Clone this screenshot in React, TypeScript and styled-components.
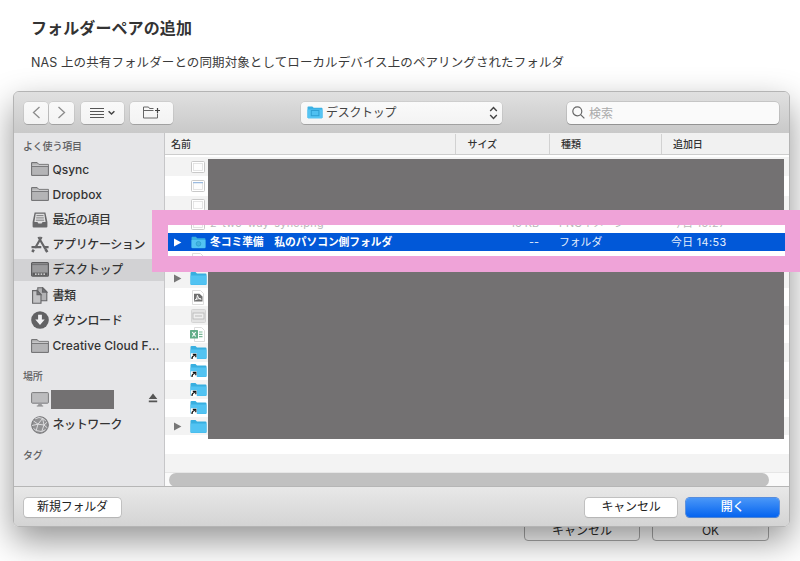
import React from "react";
import styled, { createGlobalStyle } from "styled-components";

const GlobalStyle = createGlobalStyle`
  * { box-sizing: border-box; }
  body {
    margin: 0;
    background: #fff;
    overflow: hidden;
    font-family: Inter, "Noto Sans CJK JP", sans-serif;
    color: #2c2c2c;
  }
  svg { display: block; flex: none; }
`;

const Page = styled.div`
  position: relative;
  width: 800px;
  height: 561px;
  overflow: hidden;
  display: flex;
  flex-direction: column;
  justify-content: space-between;
  background: #fff;
`;

const Intro = styled.header`
  padding: 16px 31px 0;
`;

const Title = styled.h1`
  margin: 0;
  font-size: 16px;
  line-height: 24px;
  font-weight: 700;
  letter-spacing: 0.1px;
  color: #333;
`;

const Lead = styled.p`
  margin: 13px 0 0;
  font-size: 12.5px;
  line-height: 20px;
  letter-spacing: 0.1px;
  white-space: nowrap;
  color: #3a3a3a;
`;

const BackActions = styled.div`
  display: flex;
  justify-content: flex-end;
  gap: 12px;
  padding: 0 31px 20px 0;
`;

const BackButton = styled.div`
  width: 117px;
  height: 20px;
  border: 1px solid #aaa;
  border-radius: 4px;
  background: #fff;
  font-size: 12px;
  line-height: 18px;
  text-align: center;

  &:first-child { width: 116px; }
`;

const Window = styled.section`
  position: absolute;
  left: 13px;
  top: 91px;
  width: 777px;
  height: 436px;
  display: flex;
  flex-direction: column;
  border: 1px solid #b4b4b4;
  border-radius: 6px;
  overflow: hidden;
  background: #e6e6e6;
`;

const WindowShadow = styled.div`
  position: absolute;
  left: 13px;
  top: 91px;
  width: 777px;
  height: 436px;
  border-radius: 6px;
  box-shadow: 0 14px 34px rgba(0, 0, 0, 0.42);
`;

const Toolbar = styled.div`
  flex: none;
  height: 41px;
  display: flex;
  align-items: center;
  padding: 0 10px;
  background: linear-gradient(#e0e0e0, #c9c9c9);
`;

const ToolButton = styled.div<{ w: number; gap?: number }>`
  width: ${({ w }) => w}px;
  height: 22px;
  margin-right: ${({ gap }) => gap || 0}px;
  display: flex;
  align-items: center;
  justify-content: center;
  gap: 4px;
  border-radius: 4px;
  background: linear-gradient(#f9f9f9, #f3f3f3);
  box-shadow: 0 0 0 0.5px rgba(0, 0, 0, 0.12), 0 1px 0.5px rgba(0, 0, 0, 0.16);
`;

const LocationSelect = styled.div`
  width: 201px;
  height: 22px;
  margin-left: 128px;
  padding: 0 4px 0 6px;
  display: flex;
  align-items: center;
  border-radius: 4px;
  background: linear-gradient(#fafafa, #f3f3f3);
  box-shadow: 0 0 0 0.5px rgba(0, 0, 0, 0.12), 0 1px 0.5px rgba(0, 0, 0, 0.16);
  font-size: 12px;
  line-height: 20px;
  letter-spacing: -0.3px;
  color: #444;

  span {
    flex: 1;
    margin-left: 3px;
  }
`;

const SearchField = styled.div`
  width: 212px;
  height: 22px;
  margin-left: auto;
  padding-left: 5px;
  display: flex;
  align-items: center;
  gap: 4px;
  border-radius: 4px;
  background: #fafafa;
  box-shadow: 0 0 0 0.5px rgba(0, 0, 0, 0.2), 0 1px 0.5px rgba(0, 0, 0, 0.2);
  font-size: 12px;
  color: #aaa;
`;

const Body = styled.div`
  flex: none;
  height: 353px;
  display: flex;
`;

const Sidebar = styled.nav`
  width: 151px;
  flex: none;
  padding-top: 3px;
  border-right: 1px solid #c6c6c8;
  background: #e6e6e8;
`;

const SectionLabel = styled.div<{ before?: number }>`
  height: 20px;
  margin-top: ${({ before }) => before || 0}px;
  padding-left: 9px;
  font-size: 10px;
  line-height: 21px;
  font-weight: 500;
  letter-spacing: -0.2px;
  color: #606062;
`;

const SideItem = styled.div<{ active?: boolean }>`
  height: 22.4px;
  margin-top: 2.8px;
  padding: 0 6px 0 16.5px;
  display: flex;
  align-items: center;
  gap: 4px;
  background: ${({ active }) => (active ? "#d2d2d4" : "transparent")};
  color: #333;

  ${SectionLabel} + & { margin-top: 2px; }
`;

const SideText = styled.span<{ spacing?: number }>`
  font-size: 12px;
  line-height: 20px;
  font-weight: 500;
  margin-top: 0.8px;
  letter-spacing: ${({ spacing }) => spacing || 0}px;
  white-space: nowrap;
`;

const VolumeName = styled.span`
  width: 63px;
  height: 19px;
  margin-left: -2px;
  background: #737172;
`;

const EjectSlot = styled.span`
  margin: -2px 0 0 auto;
`;

const List = styled.div`
  flex: 1;
  min-width: 0;
  display: flex;
  flex-direction: column;
  background: #fff;
`;

const columns = "291px 94px 112px 1fr";

const ListHead = styled.div`
  flex: none;
  height: 22px;
  display: grid;
  grid-template-columns: ${columns};
  padding: 1px 0;
  margin-bottom: 2px;
  background: #f1f1f1;
  border-bottom: 1px solid #cdcdcd;
`;

const HeadCell = styled.div<{ pad: number }>`
  padding-left: ${({ pad }) => pad}px;
  border-right: 1px solid #d2d2d2;
  font-size: 10px;
  line-height: 20px;
  font-weight: 500;
  letter-spacing: -0.1px;
  color: #333;

  &:last-child { border-right: none; }
`;

const Row = styled.div<{ h: number; shade?: boolean; selected?: boolean; faded?: boolean }>`
  flex: none;
  height: ${({ h }) => h}px;
  display: grid;
  grid-template-columns: ${columns};
  align-items: center;
  background: ${({ shade, selected }) => (selected ? "#0158d8" : shade ? "#f3f3f3" : "#fff")};
  color: ${({ selected, faded }) => (selected ? "#e4eefc" : faded ? "#b8b8b8" : "#333")};
  font-size: 10.8px;
  line-height: 17px;
  white-space: nowrap;
`;

const NameCell = styled.div<{ strong?: boolean }>`
  display: flex;
  align-items: center;
  color: ${({ strong }) => (strong ? "#fff" : "inherit")};
  font-weight: ${({ strong }) => (strong ? 700 : 400)};
  letter-spacing: ${({ strong }) => (strong ? "-0.08px" : "0.35px")};
`;

const ArrowSlot = styled.span`
  width: 24px;
  padding-left: 8px;
`;

const IconSlot = styled.span`
  width: 18px;
  height: 17px;
  margin-right: 3px;
  display: flex;
  align-items: center;
  justify-content: center;
`;

const SizeCell = styled.div`
  padding-right: 11px;
  text-align: right;
`;

const KindCell = styled.div`
  padding-left: 9px;
`;

const DateCell = styled.div`
  padding-left: 9px;
  letter-spacing: 0.4px;
`;

const ScrollTrack = styled.div`
  flex: 1;
  padding: 0 20px 0 4px;
  border-top: 1px solid #e6e6e6;
  background: #fafafa;
`;

const ScrollThumb = styled.div`
  height: 14px;
  border-radius: 7px;
  background: #c1c1c1;
`;

const Footer = styled.div`
  flex: 1;
  display: flex;
  align-items: center;
  gap: 9px;
  padding: 1px 10px 0;
  border-top: 1px solid #b6b6b6;
  background: linear-gradient(#e8e8e8, #d4d4d4);
`;

const PushButton = styled.div<{ w: number; primary?: boolean }>`
  width: ${({ w }) => w}px;
  height: 19px;
  border-radius: 3.5px;
  background: ${({ primary }) => (primary ? "linear-gradient(#4a97f8, #0564ef)" : "#fff")};
  box-shadow: 0 0 0 0.7px ${({ primary }) => (primary ? "#2a72dc" : "#b5b5b5")}, 0 1px 1px rgba(0, 0, 0, 0.15);
  color: ${({ primary }) => (primary ? "#fff" : "#222")};
  font-size: 12px;
  line-height: 18px;
  letter-spacing: -0.2px;
  font-weight: ${({ primary }) => (primary ? 500 : 400)};
  text-align: center;

  &:first-child { margin-right: auto; }
`;

/* solid covers over the private file names */
const Cover = styled.div<{ top: number; h: number }>`
  position: absolute;
  left: 208px;
  top: ${({ top }) => top}px;
  width: 576px;
  height: ${({ h }) => h}px;
  background: #737172;
`;

const Highlight = styled.div`
  position: absolute;
  left: 152px;
  top: 210px;
  width: 648px;
  height: 62px;
  border: solid #efa3d8;
  border-width: 15px 15px 16px 16px;
`;

const SideFolder = () => (
  <svg width="18" height="16" viewBox="0 0 18 16">
    <path d="M.6 14.4V1.6h5.6l1.6 1.8h9.6v11z" fill="#b4b4b6" stroke="#6c6c6e" />
    <path d="M1 5.300h16" stroke="#6c6c6e" />
    <path d="M1.200 4.300h16" stroke="#dcdcde" strokeWidth=".8" />
  </svg>
);

const RecentIcon = () => (
  <svg width="18" height="16" viewBox="0 0 18 16">
    <path d="M3.600.6h10.800l2 9.400v4.400q0 1-1 1H2.600q-1 0-1-1V10z" fill="#68686a" />
    <path d="M4.700 1.700h8.600l1.300 8.300h-3l-1 1.600H7.400L6.400 10h-3z" fill="#dededf" />
    <path d="M5.500 3.600h7M5.200 5.900h7.600M4.900 8.200h8.200" stroke="#828284" />
  </svg>
);

const AppsIcon = () => (
  <svg width="18" height="17" viewBox="0 0 18 17" fill="none" stroke="#656567">
    <path d="M10.600 1 4.100 12M7.400 1l7 12" strokeWidth="2.200" />
    <path d="M.5 11.200h9.800M12.800 11.200h4.800" strokeWidth="2.200" />
    <path d="M2.800 13.600 1.300 16M14.400 13l1.900 3.200" strokeWidth="2.600" />
  </svg>
);

const DesktopIcon = () => (
  <svg width="18" height="15" viewBox="0 0 18 15">
    <rect x=".6" y=".6" width="16.800" height="13.600" rx="1" fill="#9a9a9c" stroke="#5c5c5e" strokeWidth="1.200" />
    <path d="M1 2.600h16" stroke="#707072" />
    <rect x="1.500" y="10.600" width="15" height="3.200" fill="#5c5c5e" />
    <path d="M4 12.200h10.500" stroke="#eee" strokeWidth="1.300" strokeDasharray="1.600 1.200" />
  </svg>
);

const DocsIcon = () => (
  <svg width="18" height="17" viewBox="0 0 18 17" stroke="#666668" strokeWidth="1.100">
    <path d="M6.800.8h5l4 4v9h-9z" fill="#b2b2b4" />
    <path d="M11.500.8v4.300h4.300z" fill="#77777a" />
    <path d="M1.600 3.600h4.600l3.800 3.800v8.800H1.600z" fill="#c2c2c4" />
    <path d="M6 3.600v4h4z" fill="#77777a" />
  </svg>
);

const DownloadIcon = () => (
  <svg width="18" height="18" viewBox="0 0 18 18">
    <circle cx="9" cy="9" r="8.800" fill="#626264" />
    <path d="M7.100 3.800h3.800v4.600h2.800L9 13.900 4.300 8.400h2.800z" fill="#f0f0f2" />
  </svg>
);

const DisplayIcon = () => (
  <svg width="18" height="15" viewBox="0 0 18 15">
    <rect x=".6" y=".6" width="16.800" height="10.600" rx=".8" fill="#bcbcbe" stroke="#7c7c7e" />
    <path d="M7.500 11.500h3l.7 2.200H6.800z" fill="#9a9a9c" />
    <path d="M5.800 14h6.400" stroke="#7c7c7e" strokeWidth=".9" />
  </svg>
);

const NetworkIcon = () => (
  <svg width="18" height="18" viewBox="0 0 18 18" fill="none">
    <circle cx="9" cy="9" r="8.300" fill="#929294" stroke="#737375" />
    <path d="M2.600 5 7 8.200 5.200 14.500M7 8.200l4.600-5.800M7 8.200l6 .8 3.300-3M13 9l-2.300 6.600M13 9l3.500 3M11.600 2.400 13 9M1 9.500l6-1.300M4.200 2.800 8 1.500l3.600.9 3.200 2.400M2.500 12.500l2.700 2 5.500 1.100 3.800-2" stroke="#e3e3e5" strokeWidth=".9" />
  </svg>
);

const EjectIcon = () => (
  <svg width="10" height="10" viewBox="0 0 10 10" fill="#555">
    <path d="M5 .4 9.300 6H.7zM.8 7.500h8.400v1.800H.8z" />
  </svg>
);

const BlueFolder = ({ alias, mark }: { alias?: boolean; mark?: boolean }) => (
  <svg width={mark ? 15 : 17} height={mark ? 13 : 15} viewBox="0 0 17 15">
    <path d="M.5 2q0-1 1-1h4l1.500 1.500h8.500q1 0 1 1V13q0 1-1 1h-14q-1 0-1-1z" fill="#38afe0" />
    <path d="M.5 4.600h16V13q0 .8-1 .8h-14q-1 0-1-.8z" fill="#52c3f2" />
    {mark && <circle cx="8.500" cy="9" r="2.700" fill="#43b2df" stroke="#269bcc" strokeWidth=".8" />}
    {alias && (
      <g>
        <rect x=".8" y="8.200" width="6" height="6.500" rx=".5" fill="#fff" />
        <path d="M2 14q-.4-2.600 2.800-3.800M2.800 9.300h3v3" fill="none" stroke="#111" strokeWidth="1.200" />
      </g>
    )}
  </svg>
);

const LocationFolder = () => (
  <svg width="16" height="13" viewBox="0 0 16 13">
    <path d="M.5 1.300q0-.8.8-.8h4L6.700 1.700h8q.8 0 .8.800v9q0 .8-.8.800H1.300q-.8 0-.8-.8z" fill="#3bb1e4" />
    <path d="M.5 3.500h15v8q0 .8-.8.800H1.300q-.8 0-.8-.8z" fill="#55c4f3" />
    <rect x="4.300" y="4.500" width="7.600" height="5.200" fill="#4fc0f1" stroke="#2f9fd3" />
  </svg>
);

const PictureFile = ({ blue }: { blue?: boolean }) => (
  <svg width="14" height="12" viewBox="0 0 14 12">
    <rect x=".5" y=".5" width="13" height="11" rx="1" fill="#fff" stroke="#c9c9c9" />
    <rect x="2.500" y="2.500" width="9" height="7" fill="#fdfdfd" stroke="#dedede" strokeWidth=".8" />
    {blue && <path d="M2 2.700h10" stroke="#9bbbe0" strokeWidth="1.200" />}
  </svg>
);

const PdfFile = () => (
  <svg width="12" height="15" viewBox="0 0 12 15">
    <path d="M.5.500h8l3 3v11H.5z" fill="#fff" stroke="#ddd" />
    <path d="M2 3.800h5.500l3 2.700v5H2z" fill="#6e6e6e" />
    <path d="M3 10.300q2.500-2 2.400-5 .3 3.600 4 4M3.500 9.600q3-1.400 5.500-.6" fill="none" stroke="#fff" strokeWidth=".9" />
  </svg>
);

const DriveFile = () => (
  <svg width="15" height="14" viewBox="0 0 15 14">
    <rect x=".5" y=".5" width="14" height="13" rx="1" fill="#e3e3e3" stroke="#d4d4d4" />
    <rect x="2" y="4" width="11" height="6" fill="#eee" stroke="#b4b4b4" strokeWidth=".8" />
    <path d="M4 7h7" stroke="#bbb" />
  </svg>
);

const ExcelFile = () => (
  <svg width="16" height="15" viewBox="0 0 16 15">
    <path d="M4.500.5h7l3 3v11h-10z" fill="#fff" stroke="#ddd" />
    <path d="M9 5h3.500M9 7.300h3.500M9 9.600h3.500" stroke="#79b897" strokeWidth="1.200" />
    <rect x="0" y="3" width="8" height="8.500" rx=".5" fill="#62ad88" />
    <path d="m2.300 5 3.400 4.500M5.700 5 2.300 9.500" stroke="#fff" strokeWidth="1.200" />
  </svg>
);

const Arrow = ({ color = "#777" }: { color?: string }) => (
  <svg width="9" height="9" viewBox="0 0 9 9">
    <path d="M1 .4 8.400 4.500 1 8.600z" fill={color} />
  </svg>
);

const favourites = [
  { label: "Qsync", icon: <SideFolder />, spacing: 0 },
  { label: "Dropbox", icon: <SideFolder />, spacing: 0.1 },
  { label: "最近の項目", icon: <RecentIcon />, spacing: -0.4 },
  { label: "アプリケーション", icon: <AppsIcon />, spacing: -0.4 },
  { label: "デスクトップ", icon: <DesktopIcon />, active: true, spacing: -0.25 },
  { label: "書類", icon: <DocsIcon />, spacing: -0.4 },
  { label: "ダウンロード", icon: <DownloadIcon />, spacing: -0.35 },
  { label: "Creative Cloud F...", icon: <SideFolder />, spacing: 0.06 },
];

const rows: {
  h: number;
  icon?: React.ReactNode;
  arrow?: boolean;
  selected?: boolean;
  faded?: boolean;
  name?: string;
  size?: string;
  kind?: string;
  date?: string;
}[] = [
  { h: 19, icon: <PictureFile /> },
  { h: 19.5, icon: <PictureFile blue /> },
  { h: 19, icon: <PictureFile /> },
  { h: 18.5, icon: <PictureFile />, faded: true, name: "2-two-way-sync.png", size: "16 KB", kind: "PNGイメージ", date: "今日 15:27" },
  { h: 18, icon: <BlueFolder mark />, arrow: true, selected: true, name: "冬コミ準備　私のパソコン側フォルダ", size: "--", kind: "フォルダ", date: "今日 14:53" },
  { h: 18.5, icon: <PdfFile /> },
  { h: 18.45, icon: <BlueFolder />, arrow: true },
  { h: 18.45, icon: <PdfFile /> },
  { h: 18.45, icon: <DriveFile /> },
  { h: 18.45, icon: <ExcelFile /> },
  { h: 18.45, icon: <BlueFolder alias /> },
  { h: 18.45, icon: <BlueFolder alias /> },
  { h: 18.45, icon: <BlueFolder alias /> },
  { h: 18.45, icon: <BlueFolder alias /> },
  { h: 18.45, icon: <BlueFolder />, arrow: true },
  { h: 18.45 },
  { h: 18 },
];

const App: React.FC = () => (
  <Page>
    <GlobalStyle />
    <Intro>
      <Title>フォルダーペアの追加</Title>
      <Lead>NAS 上の共有フォルダーとの同期対象としてローカルデバイス上のペアリングされたフォルダ</Lead>
    </Intro>
    <BackActions>
      <BackButton>キャンセル</BackButton>
      <BackButton>OK</BackButton>
    </BackActions>

    <WindowShadow />
    <Window>
      <Toolbar>
        <ToolButton w={24} gap={1}>
          <svg width="9" height="13" viewBox="0 0 9 13" fill="none" stroke="#8c8c8c" strokeWidth="1.300"><path d="M7.500 1 1.500 6.500l6 5.500" /></svg>
        </ToolButton>
        <ToolButton w={25} gap={7}>
          <svg width="9" height="13" viewBox="0 0 9 13" fill="none" stroke="#8c8c8c" strokeWidth="1.300"><path d="m1.500 1 6 5.500-6 5.500" /></svg>
        </ToolButton>
        <ToolButton w={43} gap={6}>
          <svg width="14" height="12" viewBox="0 0 14 12" stroke="#555" strokeWidth="1.100"><path d="M0 1.500h14M0 4.500h14M0 7.500h14M0 10.500h14" /></svg>
          <svg width="7" height="6" viewBox="0 0 7 6" fill="none" stroke="#444" strokeWidth="1.500"><path d="m.6 1.200 2.900 2.800 2.900-2.800" /></svg>
        </ToolButton>
        <ToolButton w={43}>
          <svg width="17" height="13" viewBox="0 0 17 13" fill="none" stroke="#666">
            <path d="M10.500 2.500H6.500L5.500 1h-5v11h14V7.500M.5 4.500h10" />
            <path d="M14.500 2v5M12 4.500h5" stroke="#444" strokeWidth="1.200" />
          </svg>
        </ToolButton>
        <LocationSelect>
          <LocationFolder />
          <span>デスクトップ</span>
          <svg width="9" height="14" viewBox="0 0 9 14" fill="none" stroke="#444" strokeWidth="1.400"><path d="m1.200 5 3.300-3.500L7.800 5M1.200 9l3.300 3.500L7.800 9" /></svg>
        </LocationSelect>
        <SearchField>
          <svg width="13" height="13" viewBox="0 0 13 13" fill="none" stroke="#686868" strokeWidth="1.200"><circle cx="5.300" cy="5.300" r="4.500" /><path d="m8.600 8.600 3.800 3.800" /></svg>
          検索
        </SearchField>
      </Toolbar>

      <Body>
        <Sidebar>
          <SectionLabel>よく使う項目</SectionLabel>
          {favourites.map(({ label, icon, active, spacing }) => (
            <SideItem key={label} active={active}>
              {icon}
              <SideText spacing={spacing}>{label}</SideText>
            </SideItem>
          ))}
          <SectionLabel before={9.5}>場所</SectionLabel>
          <SideItem>
            <DisplayIcon />
            <VolumeName />
            <EjectSlot><EjectIcon /></EjectSlot>
          </SideItem>
          <SideItem>
            <NetworkIcon />
            <SideText spacing={-0.4}>ネットワーク</SideText>
          </SideItem>
          <SectionLabel before={9.5}>タグ</SectionLabel>
        </Sidebar>

        <List>
          <ListHead>
            <HeadCell pad={6}>名前</HeadCell>
            <HeadCell pad={11.5}>サイズ</HeadCell>
            <HeadCell pad={11}>種類</HeadCell>
            <HeadCell pad={11}>追加日</HeadCell>
          </ListHead>
          {rows.map((row, i) => (
            <Row key={i} h={row.h} shade={i % 2 === 0} selected={row.selected} faded={row.faded}>
              <NameCell strong={row.selected}>
                <ArrowSlot>{row.arrow && <Arrow color={row.selected ? "#fff" : undefined} />}</ArrowSlot>
                <IconSlot>{row.icon}</IconSlot>
                {row.name}
              </NameCell>
              <SizeCell>{row.size}</SizeCell>
              <KindCell>{row.kind}</KindCell>
              <DateCell>{row.date}</DateCell>
            </Row>
          ))}
          <ScrollTrack><ScrollThumb /></ScrollTrack>
        </List>
      </Body>

      <Footer>
        <PushButton w={97}>新規フォルダ</PushButton>
        <PushButton w={92}>キャンセル</PushButton>
        <PushButton w={93} primary>開く</PushButton>
      </Footer>
    </Window>

    <Cover top={159} h={52} />
    <Cover top={271} h={168} />
    <Highlight />
  </Page>
);

export default App;
